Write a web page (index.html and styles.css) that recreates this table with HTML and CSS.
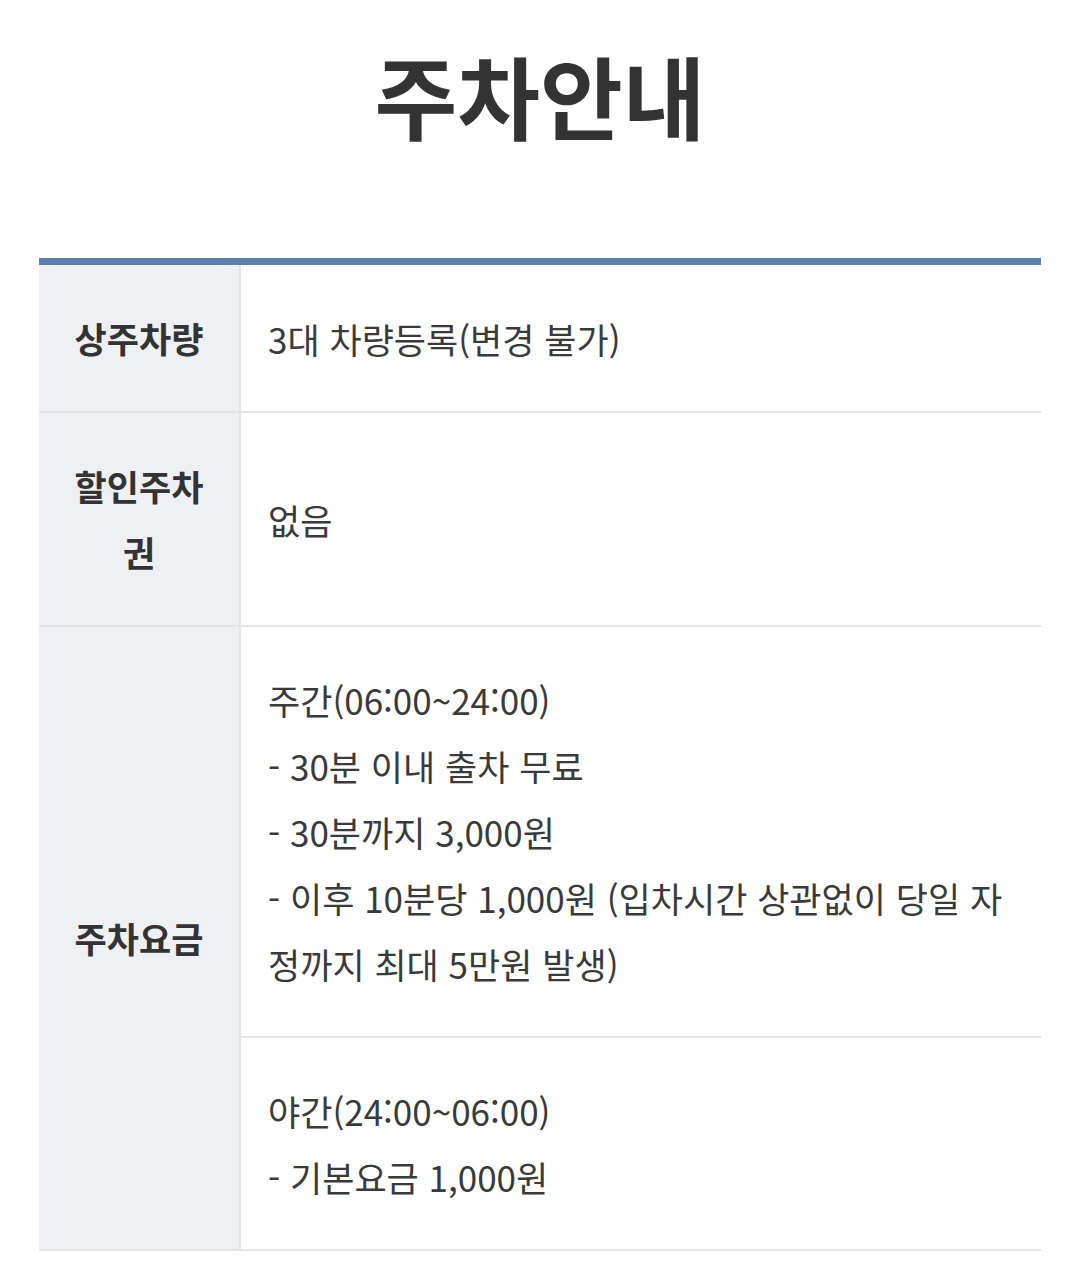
FILE: index.html
```html
<!DOCTYPE html>
<html lang="ko">
<head>
<meta charset="utf-8">
<title>주차안내</title>
<link rel="stylesheet" href="styles.css">
</head>
<body>
<div class="page">
  <h1 class="title">주차안내</h1>
  <table class="info">
    <tbody>
      <tr>
        <th class="label">상주차량</th>
        <td class="value">3대 차량등록(변경 불가)</td>
      </tr>
      <tr>
        <th class="label">할인주차권</th>
        <td class="value">없음</td>
      </tr>
      <tr>
        <th class="label" rowspan="2">주차요금</th>
        <td class="value">주간(06:00~24:00)<br>- 30분 이내 출차 무료<br>- 30분까지 3,000원<br>- 이후 10분당 1,000원 (입차시간 상관없이 당일 자정까지 최대 5만원 발생)</td>
      </tr>
      <tr>
        <td class="value">야간(24:00~06:00)<br>- 기본요금 1,000원</td>
      </tr>
    </tbody>
  </table>
</div>
</body>
</html>
```
FILE: styles.css
```css
html, body {
  margin: 0;
  padding: 0;
  background: #ffffff;
}
body {
  font-family: "Noto Sans CJK KR", "Noto Sans", sans-serif;
  color: #333333;
}
.page {
  padding: 0 38px 0 39px;
}
.title {
  margin: 0;
  padding-top: 37px;
  height: 258px;
  box-sizing: border-box;
  text-align: center;
  font-size: 90px;
  line-height: 115px;
  font-weight: 700;
  color: #333333;
}
.info {
  width: 100%;
  border-collapse: collapse;
  border-top: 7px solid #5b7fae;
}
.info tr {
  border-bottom: 2px solid #e3e4e7;
}
.label {
  width: 201px;
  box-sizing: border-box;
  padding: 40px 28px;
  background: #eff0f3;
  border-right: 2px solid #e3e4e7;
  font-size: 35px;
  line-height: 66px;
  font-weight: 700;
  text-align: center;
  vertical-align: middle;
  color: #333333;
}
.value {
  padding: 40px 30px 39px 27px;
  font-size: 35px;
  line-height: 66px;
  font-weight: 400;
  text-align: left;
  vertical-align: middle;
  color: #3a3a3a;
}
```
